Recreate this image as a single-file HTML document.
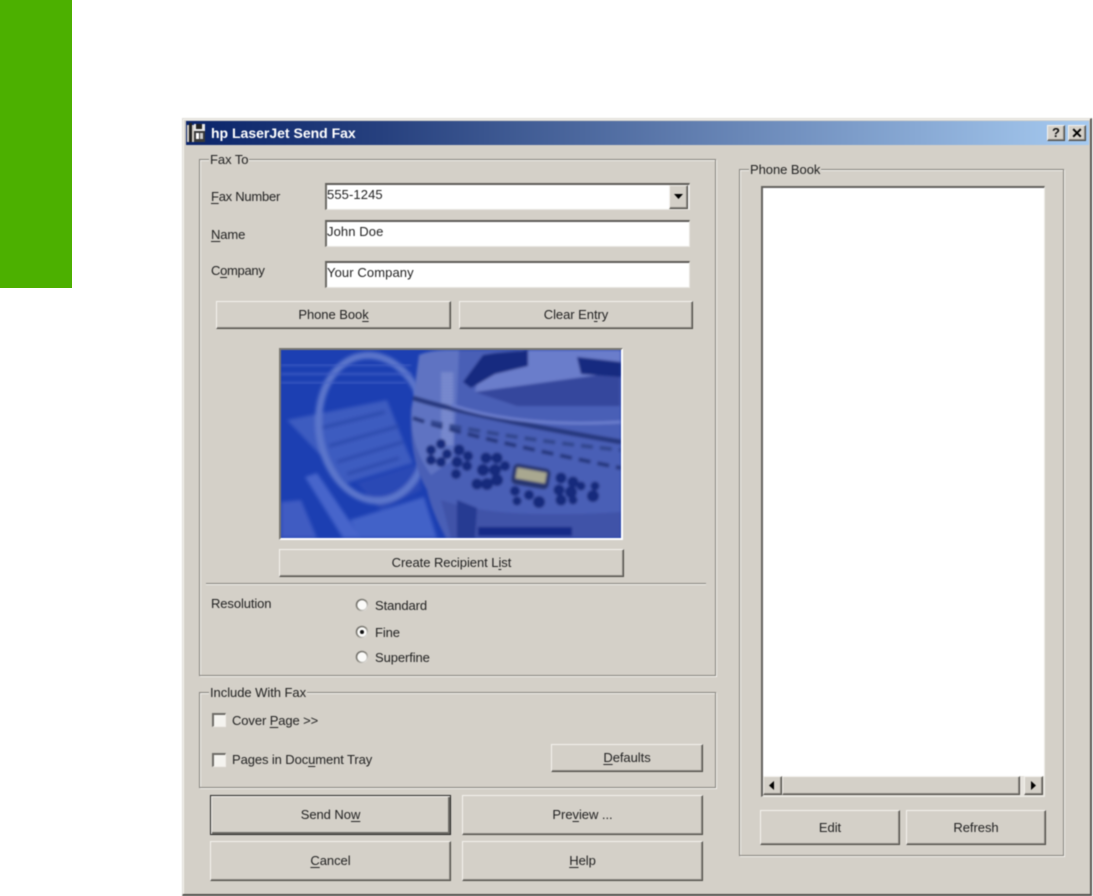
<!DOCTYPE html>
<html>
<head>
<meta charset="utf-8">
<style>
html,body{margin:0;padding:0;background:#fff;}
body{width:1093px;height:896px;position:relative;overflow:hidden;font-family:"Liberation Sans",sans-serif;font-size:13px;color:#222;}
div{position:absolute;box-sizing:border-box;}
#w{left:0;top:0;width:1093px;height:896px;filter:blur(.4px);}
.t{white-space:nowrap;line-height:16px;height:16px;letter-spacing:-.1px;}
.btn{background:#d4d0c8;border:1px solid;border-color:#f4f2ee #4a4843 #4a4843 #f4f2ee;box-shadow:inset -1px -1px 0 #8f8c85;text-align:center;white-space:nowrap;letter-spacing:-.05px;color:#222;}
.grp{border:1px solid #85837d;box-shadow:1px 1px 0 #f3f1ed,inset 1px 1px 0 #f3f1ed;}
.lbl{background:#d4d0c8;padding:0 1px;white-space:nowrap;line-height:16px;letter-spacing:-.05px;}
.inp{background:#fff;border-top:2px solid #5f5d59;border-left:2px solid #6d6b66;border-right:1px solid #e8e6e0;border-bottom:1px solid #e8e6e0;padding-left:0;white-space:nowrap;letter-spacing:.1px;color:#222;}
.cb{width:14px;height:14px;background:#f4f3ef;border-top:2px solid #6e6c67;border-left:2px solid #6e6c67;border-right:1px solid #f0eee9;border-bottom:1px solid #f0eee9;}
u{text-decoration-thickness:1px;text-underline-offset:2px;}
</style>
</head>
<body>
<div style="left:0;top:0;width:72px;height:288px;background:#4cb000;"></div>
<div id="w">

<!-- window -->
<div style="left:182px;top:118px;width:910px;height:778px;background:#d4d0c8;border-top:1px solid #dedbd5;border-left:1px solid #dedbd5;border-right:2px solid #5a5854;border-bottom:2px solid #4e4c48;box-shadow:inset 1px 1px 0 #f5f4f1;"></div>

<!-- title bar -->
<div style="left:186px;top:121px;width:903px;height:24px;background:linear-gradient(90deg,#0a246a 0%,#27417f 22%,#5f7cae 55%,#a6caf0 100%);"></div>
<svg style="position:absolute;left:187px;top:122px;" width="20" height="22" viewBox="0 0 20 22">
<rect x="0" y="3" width="7" height="17" fill="#d4d0c8"/><rect x="2" y="1" width="3" height="19" fill="#222"/>
<rect x="7" y="2" width="11" height="18" fill="#e8e8e8"/><rect x="7" y="9" width="11" height="11" fill="#3a3a3a"/>
<rect x="9" y="11" width="3" height="6" fill="#fff"/><rect x="13" y="11" width="3" height="6" fill="#ccc"/><rect x="9" y="2" width="6" height="5" fill="#222"/>
</svg>
<div class="t" style="left:211px;top:125px;color:#fff;font-weight:bold;font-size:14px;letter-spacing:0;">hp LaserJet Send Fax</div>
<div class="btn" style="left:1047px;top:125px;width:18px;height:16px;font:bold 13px/14px 'Liberation Sans',sans-serif;color:#111;letter-spacing:0;">?</div>
<div class="btn" style="left:1068px;top:125px;width:18px;height:16px;font:bold 14px/14px 'Liberation Sans',sans-serif;color:#000;letter-spacing:0;">✕</div>

<!-- Fax To -->
<div class="grp" style="left:199px;top:159px;width:517px;height:517px;"></div>
<div class="lbl" style="left:209px;top:152px;">Fax To</div>
<div class="t" style="left:211px;top:189px;letter-spacing:-.25px;"><u>F</u>ax Number</div>
<div class="inp" style="left:325px;top:183px;width:365px;height:27px;line-height:20px;">555-1245</div>
<div class="btn" style="left:669px;top:185px;width:19px;height:24px;"></div>
<svg style="position:absolute;left:674px;top:194px;" width="10" height="6"><path d="M0 0H9L4.500 5Z" fill="#000"/></svg>
<div class="t" style="left:211px;top:227px;"><u>N</u>ame</div>
<div class="inp" style="left:325px;top:220px;width:365px;height:27px;line-height:20px;">John Doe</div>
<div class="t" style="left:211px;top:263px;letter-spacing:-.3px;">C<u>o</u>mpany</div>
<div class="inp" style="left:325px;top:261px;width:365px;height:27px;line-height:20px;">Your Company</div>
<div class="btn" style="left:216px;top:301px;width:235px;height:28px;line-height:25px;">Phone Boo<u>k</u></div>
<div class="btn" style="left:459px;top:301px;width:234px;height:28px;line-height:25px;">Clear En<u>t</u>ry</div>

<!-- image -->
<div style="left:279px;top:348px;width:344px;height:192px;border-top:2px solid #7a7873;border-left:2px solid #7a7873;border-right:2px solid #fff;border-bottom:2px solid #fff;"></div>
<svg style="position:absolute;left:281px;top:350px;" width="340" height="188" viewBox="0 0 340 188">
<defs><filter id="b" x="-5%" y="-5%" width="110%" height="110%"><feGaussianBlur stdDeviation="1.300"/></filter>
<filter id="b2" x="-5%" y="-5%" width="110%" height="110%"><feGaussianBlur stdDeviation="1.800"/></filter>
<clipPath id="c"><rect width="340" height="188"/></clipPath>
<pattern id="dots" width="3" height="3" patternUnits="userSpaceOnUse"><rect width="3" height="3" fill="#6f82cc"/><rect width="1.500" height="1.500" fill="#c7cfee"/></pattern></defs>
<g clip-path="url(#c)">
<rect width="340" height="188" fill="#1c3fb2"/>
<g filter="url(#b2)">
<path d="M6 70L106 50L126 100L132 113L66 133Z" fill="#3d5cc0"/>
<path d="M76 133L140 113L140 140L100 160Z" fill="#2b49b5"/>
<path d="M69 170L143 147L156 188L79 188Z" fill="#4362c8"/>
<path d="M0 152L20 150L36 188H0Z" fill="#3f5cc2"/>
<path d="M24 127L36 123L80 188H62Z" fill="#4765cb"/>
<path d="M40 78L104 62M48 96L118 76M56 112L122 92M66 124L118 108" stroke="#2a48ac" stroke-width="3" fill="none"/>
<ellipse cx="92" cy="78" rx="54" ry="73" transform="rotate(-8 92 78)" fill="none" stroke="#5c76cb" stroke-width="7"/>
</g>
<g stroke="#4663c6" stroke-width="1.500" filter="url(#b)"><path d="M0 15H130M0 24H130M0 33H125"/></g>
<g filter="url(#b)">
<path d="M130 60Q135 25 168 0H340V188H165Q150 160 146 140Q128 110 130 60Z" fill="#4a5fb6"/>
<path d="M138 5Q150 0 166 0L178 0L176 48L172 110L150 125Q125 90 132 50Z" fill="#5f73c2"/>
<path d="M160 22L172 22L172 95L160 95Z" fill="url(#dots)" opacity=".55"/>
<path d="M202 8L240 0H340V24L260 38L194 42Z" fill="#6b7dcb"/>
<path d="M194 42L339 22V56H236Z" fill="#34479d"/>
<path d="M182 32L202 5L214 3L247 0L247 16L214 24L190 38Z" fill="#152a80"/>
<path d="M296 7L340 12V27L300 24Z" fill="#152a80"/>
<path d="M132 48Q190 66 340 92" stroke="#26397f" stroke-width="5" fill="none"/>
<path d="M132 68Q190 88 340 118" stroke="#26397f" stroke-width="4" fill="none" stroke-dasharray="12 7"/>
<path d="M150 72Q240 90 340 100" stroke="#33468f" stroke-width="4" fill="none" stroke-dasharray="12 7"/>
<path d="M170 55Q240 78 340 72" stroke="#6c7ece" stroke-width="3" fill="none"/>
<path d="M160 150Q215 170 340 162V188H170Z" fill="#3f53a8"/>
<path d="M176 150L196 158L194 188H176Z" fill="#263a92"/>
<path d="M197 177H291V186H197Z" fill="#142988"/>
<g fill="#172a7c">
<circle cx="150" cy="100" r="5"/><circle cx="160" cy="94" r="5"/><circle cx="166" cy="104" r="5"/><circle cx="150" cy="110" r="5"/><circle cx="160" cy="112" r="5"/>
<circle cx="178" cy="100" r="5.500"/><circle cx="187" cy="106" r="5"/><circle cx="176" cy="112" r="5.500"/><circle cx="186" cy="116" r="5"/><circle cx="175" cy="124" r="5"/>
<circle cx="205" cy="108" r="5.500"/><circle cx="216" cy="108" r="5.500"/><circle cx="224" cy="116" r="5"/><circle cx="202" cy="120" r="6"/><circle cx="214" cy="120" r="6"/><circle cx="196" cy="134" r="5.500"/><circle cx="206" cy="134" r="6"/><circle cx="216" cy="130" r="6"/>
<circle cx="234" cy="141" r="5"/><circle cx="236" cy="151" r="4.500"/><circle cx="248" cy="145" r="5"/><circle cx="258" cy="152" r="6"/>
<circle cx="280" cy="128" r="5.500"/><circle cx="292" cy="132" r="5.500"/><circle cx="300" cy="136" r="4.500"/><circle cx="278" cy="140" r="5.500"/><circle cx="290" cy="142" r="6"/><circle cx="280" cy="150" r="5.500"/><circle cx="292" cy="150" r="4.500"/><circle cx="314" cy="136" r="4.500"/><circle cx="312" cy="146" r="6"/>
</g>
<g transform="rotate(10 250 126)"><rect x="231" y="116" width="38" height="21" rx="5" fill="#26366f"/><rect x="235" y="120" width="30" height="11" fill="#a9a890"/></g>
</g>
</g>
</svg>

<div class="btn" style="left:279px;top:549px;width:345px;height:28px;line-height:25px;">Create Recipient L<u>i</u>st</div>
<div style="left:206px;top:583px;width:500px;height:2px;border-top:1px solid #85837d;border-bottom:1px solid #f3f1ed;"></div>

<div class="t" style="left:211px;top:596px;">Resolution</div>
<svg style="position:absolute;left:354px;top:597px;" width="16" height="70" viewBox="0 0 16 70">
<defs><linearGradient id="r" x1="0" y1="0" x2="1" y2="1"><stop offset="0" stop-color="#6c6a65"/><stop offset=".5" stop-color="#8a8880"/><stop offset="1" stop-color="#f4f2ee"/></linearGradient></defs>
<circle cx="8" cy="8" r="5.500" fill="#fbfbf9" stroke="url(#r)" stroke-width="1.600"/>
<circle cx="8" cy="35" r="5.500" fill="#fbfbf9" stroke="url(#r)" stroke-width="1.600"/><circle cx="8" cy="35" r="2" fill="#111"/>
<circle cx="8" cy="60" r="5.500" fill="#fbfbf9" stroke="url(#r)" stroke-width="1.600"/>
</svg>
<div class="t" style="left:375px;top:598px;">Standard</div>
<div class="t" style="left:375px;top:625px;">Fine</div>
<div class="t" style="left:375px;top:650px;">Superfine</div>

<!-- Include -->
<div class="grp" style="left:199px;top:692px;width:517px;height:96px;"></div>
<div class="lbl" style="left:209px;top:685px;">Include With Fax</div>
<div class="cb" style="left:212px;top:713px;"></div>
<div class="t" style="left:232px;top:713px;">Cover <u>P</u>age &gt;&gt;</div>
<div class="cb" style="left:212px;top:753px;"></div>
<div class="t" style="left:232px;top:752px;">Pages in Doc<u>u</u>ment Tray</div>
<div class="btn" style="left:551px;top:744px;width:152px;height:28px;line-height:25px;"><u>D</u>efaults</div>

<div class="btn" style="left:210px;top:795px;width:241px;height:40px;line-height:37px;border:1px solid #222;box-shadow:inset 1px 1px 0 #f4f2ee,inset -2px -2px 0 #6d6b66;">Send No<u>w</u></div>
<div class="btn" style="left:462px;top:795px;width:241px;height:40px;line-height:37px;">Pre<u>v</u>iew ...</div>
<div class="btn" style="left:210px;top:841px;width:241px;height:40px;line-height:37px;"><u>C</u>ancel</div>
<div class="btn" style="left:462px;top:841px;width:241px;height:40px;line-height:37px;"><u>H</u>elp</div>

<!-- Phone book -->
<div class="grp" style="left:739px;top:169px;width:325px;height:687px;"></div>
<div class="lbl" style="left:749px;top:162px;">Phone Book</div>
<div style="left:761px;top:186px;width:284px;height:611px;background:#fff;border-top:2px solid #64625e;border-left:2px solid #64625e;border-right:1px solid #ecebe6;border-bottom:1px solid #ecebe6;"></div>
<div style="left:763px;top:776px;width:281px;height:20px;background:#e6e3dd;"></div>
<div class="btn" style="left:763px;top:776px;width:19px;height:19px;"></div>
<div class="btn" style="left:782px;top:776px;width:238px;height:19px;"></div>
<div class="btn" style="left:1024px;top:776px;width:19px;height:19px;"></div>
<svg style="position:absolute;left:769px;top:781px;" width="8" height="10"><path d="M5 0V9L0 4.500Z" fill="#000"/></svg>
<svg style="position:absolute;left:1031px;top:781px;" width="8" height="10"><path d="M0 0V9L5 4.500Z" fill="#000"/></svg>
<div class="btn" style="left:760px;top:810px;width:140px;height:35px;line-height:33px;">Edit</div>
<div class="btn" style="left:906px;top:810px;width:140px;height:35px;line-height:33px;">Refresh</div>
</div>
</body>
</html>
